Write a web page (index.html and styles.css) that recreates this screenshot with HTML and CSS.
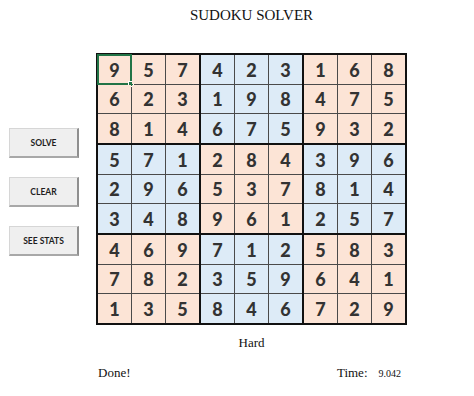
FILE: index.html
```html
<!DOCTYPE html>
<html>
<head>
<meta charset="utf-8">
<link rel="stylesheet" href="styles.css">
</head>
<body>
<div class="page">
  <aside class="buttons">
    <div class="btn">SOLVE</div>
    <div class="btn">CLEAR</div>
    <div class="btn">SEE STATS</div>
  </aside>
  <main class="col">
    <h1 class="title">SUDOKU SOLVER</h1>
    <div class="board">
      <div class="block peach">
        <div class="cell sel">9</div><div class="cell">5</div><div class="cell">7</div>
        <div class="cell">6</div><div class="cell">2</div><div class="cell">3</div>
        <div class="cell">8</div><div class="cell">1</div><div class="cell">4</div>
      </div>
      <div class="block blue">
        <div class="cell">4</div><div class="cell">2</div><div class="cell">3</div>
        <div class="cell">1</div><div class="cell">9</div><div class="cell">8</div>
        <div class="cell">6</div><div class="cell">7</div><div class="cell">5</div>
      </div>
      <div class="block peach">
        <div class="cell">1</div><div class="cell">6</div><div class="cell">8</div>
        <div class="cell">4</div><div class="cell">7</div><div class="cell">5</div>
        <div class="cell">9</div><div class="cell">3</div><div class="cell">2</div>
      </div>
      <div class="block blue">
        <div class="cell">5</div><div class="cell">7</div><div class="cell">1</div>
        <div class="cell">2</div><div class="cell">9</div><div class="cell">6</div>
        <div class="cell">3</div><div class="cell">4</div><div class="cell">8</div>
      </div>
      <div class="block peach">
        <div class="cell">2</div><div class="cell">8</div><div class="cell">4</div>
        <div class="cell">5</div><div class="cell">3</div><div class="cell">7</div>
        <div class="cell">9</div><div class="cell">6</div><div class="cell">1</div>
      </div>
      <div class="block blue">
        <div class="cell">3</div><div class="cell">9</div><div class="cell">6</div>
        <div class="cell">8</div><div class="cell">1</div><div class="cell">4</div>
        <div class="cell">2</div><div class="cell">5</div><div class="cell">7</div>
      </div>
      <div class="block peach">
        <div class="cell">4</div><div class="cell">6</div><div class="cell">9</div>
        <div class="cell">7</div><div class="cell">8</div><div class="cell">2</div>
        <div class="cell">1</div><div class="cell">3</div><div class="cell">5</div>
      </div>
      <div class="block blue">
        <div class="cell">7</div><div class="cell">1</div><div class="cell">2</div>
        <div class="cell">3</div><div class="cell">5</div><div class="cell">9</div>
        <div class="cell">8</div><div class="cell">4</div><div class="cell">6</div>
      </div>
      <div class="block peach">
        <div class="cell">5</div><div class="cell">8</div><div class="cell">3</div>
        <div class="cell">6</div><div class="cell">4</div><div class="cell">1</div>
        <div class="cell">7</div><div class="cell">2</div><div class="cell">9</div>
      </div>
    </div>
    <div class="level">Hard</div>
    <div class="status">
      <span class="done">Done!</span>
      <span class="time"><span class="time-label">Time:</span><span class="time-val">9.042</span></span>
    </div>
  </main>
</div>
</body>
</html>
```

FILE: styles.css
```css
* { box-sizing: border-box; }
html, body { margin: 0; padding: 0; background: #fff; }
.page {
  width: 474px;
  height: 396px;
  display: flex;
  font-family: "Liberation Serif", "Times New Roman", serif;
  color: #111;
}
.buttons {
  margin-left: 9px;
  width: 70px;
  padding-top: 128px;
  display: flex;
  flex-direction: column;
  gap: 19px;
}
.btn {
  height: 30px;
  background: #efefef;
  border: 1px solid #d6d6d6;
  border-right: 2px solid #8f8f8f;
  border-bottom: 2px solid #a8a8a8;
  display: flex;
  align-items: center;
  justify-content: center;
  font-family: Lato, "Open Sans", sans-serif;
  font-weight: 700;
  font-size: 8.5px;
  color: #1e1e1e;
}
.col {
  margin-left: 17px;
  width: 311px;
  display: flex;
  flex-direction: column;
}
.title {
  margin: 0;
  padding-top: 5px;
  font-size: 15px;
  line-height: 20px;
  font-weight: 400;
  text-align: center;
  color: #111;
}
.board {
  margin-top: 28px;
  display: grid;
  grid-template-columns: repeat(3, 101px);
  grid-template-rows: repeat(3, 88px);
  gap: 2px;
  padding: 2px;
  background: #111;
  width: 311px;
}
.block {
  display: grid;
  grid-template-columns: repeat(3, 33px);
  grid-template-rows: 29px 28px 29px;
  gap: 1px;
  background: #4a4a4a;
}
.cell {
  display: flex;
  align-items: center;
  justify-content: center;
  font-family: Lato, "Open Sans", sans-serif;
  font-weight: 900;
  font-size: 18px;
  color: #333;
  position: relative;
}
.peach .cell { background: #fce4d6; }
.blue .cell { background: #ddebf7; }
.cell.sel { outline: 2px solid #217346; outline-offset: -1px; }
.cell.sel::after {
  content: "";
  position: absolute;
  right: -3px;
  bottom: -3px;
  width: 4px;
  height: 4px;
  background: #217346;
  border: 1px solid #fff;
}
.level {
  margin-top: 10px;
  text-align: center;
  font-size: 13px;
  line-height: 16px;
}
.status {
  margin-top: 14px;
  display: flex;
  justify-content: space-between;
  align-items: baseline;
  font-size: 13px;
  line-height: 16px;
  padding-left: 2px;
  padding-right: 6px;
}
.time { display: flex; align-items: baseline; gap: 11px; }
.time-val { font-size: 10px; }
```
